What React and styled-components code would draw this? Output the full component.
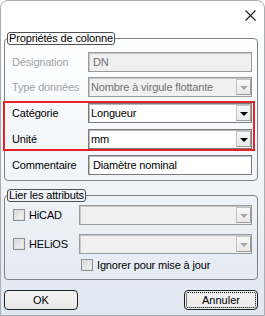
import React from "react";
import styled, { createGlobalStyle } from "styled-components";

const GlobalStyle = createGlobalStyle`
  html, body { margin: 0; padding: 0; background: #ffffff; }
  body {
    font-family: "Liberation Sans", Arial, sans-serif;
    font-size: 11px;
    letter-spacing: -0.15px;
    color: #000;
  }
  * { box-sizing: border-box; }
`;

const Window = styled.div`
  width: 265px;
  height: 316px;
  border: 1px solid #a9acb2;
  border-radius: 8px 8px 0 0;
  background: linear-gradient(to bottom, #ffffff 0px, #ffffff 30px, #f3f6fa 160px, #dfe7f1 316px);
  display: flex;
  flex-direction: column;
  padding: 0 6px 0 3px;
  overflow: hidden;
`;

const TitleBar = styled.div`
  height: 31px;
  display: flex;
  justify-content: flex-end;
  align-items: flex-start;
  padding: 9px 2px 0 0;
`;

const CloseIcon = styled.svg`
  width: 11px;
  height: 11px;
  display: block;
`;

const Group = styled.fieldset`
  margin: 0;
  padding: 0;
  min-width: 0;
  border: 1px solid #7f8287;
  border-radius: 4px;
  margin-top: ${(p) => p.$top || 0}px;
`;

const Legend = styled.legend`
  margin-left: 2px;
  padding: 0 1px 0 1px;
  height: 13px;
  line-height: 11px;
  border: 1px solid #4e5257;
  border-radius: 3px;
  font-size: 11px;
  color: #000;
`;

const GroupBody = styled.div`
  display: flex;
  flex-direction: column;
  padding: ${(p) => p.$pad};
`;

const Row = styled.div`
  display: grid;
  grid-template-columns: 76px 164px;
  align-items: center;
  height: 20px;
  margin-top: ${(p) => p.$gap || 0}px;
`;

const Label = styled.span`
  color: ${(p) => (p.$disabled ? "#a2a2a2" : "#000")};
  white-space: nowrap;
`;

const Highlight = styled.div`
  display: flex;
  flex-direction: column;
  gap: 6px;
  border: 2px solid #e4222a;
  margin: 4px -3px 0 -9px;
  padding: 0 1px 0 7px;
`;

const Field = styled.div`
  height: 20px;
  border: 1px solid ${(p) => (p.$disabled ? "#9a9a9a" : "#7a7a7a")};
  box-shadow: inset 1px 1px 0 ${(p) => (p.$disabled ? "#c9c9c9" : "#b9b9b9")};
  background: ${(p) => (p.$disabled ? "#f0f0f0" : "#ffffff")};
  color: ${(p) => (p.$disabled ? "#707070" : "#000")};
  display: flex;
  align-items: center;
  padding: 0 0 0 4px;
  white-space: nowrap;
  overflow: hidden;
`;

const Combo = styled.div`
  height: 20px;
  border: 1px solid ${(p) => (p.$disabled ? "#9a9a9a" : "#7a7a7a")};
  box-shadow: inset 1px 1px 0 ${(p) => (p.$disabled ? "#c9c9c9" : "#b9b9b9")};
  background: ${(p) => (p.$disabled ? "#f0f0f0" : "#ffffff")};
  color: ${(p) => (p.$disabled ? "#707070" : "#000")};
  display: flex;
  align-items: stretch;
  padding: 1px 0 1px 2px;
`;

const ComboValue = styled.span`
  flex: 1;
  display: flex;
  align-items: center;
  white-space: nowrap;
  overflow: hidden;
`;

const DropButton = styled.span`
  width: 15px;
  background: linear-gradient(to bottom, #f7f7f7, #e9e9e9);
  border: 1px solid #c3c3c3;
  border-right-color: #9d9d9d;
  border-bottom-color: #9d9d9d;
  display: flex;
  align-items: center;
  justify-content: center;
`;

const Arrow = styled.span`
  width: 0;
  height: 0;
  border-left: 4px solid transparent;
  border-right: 4px solid transparent;
  border-top: 4px solid ${(p) => (p.$disabled ? "#a8a8a8" : "#000")};
  margin-top: 1px;
`;

const LinkRow = styled.div`
  display: grid;
  grid-template-columns: 66px 173px;
  align-items: center;
  height: 20px;
  margin-top: ${(p) => p.$gap || 0}px;
`;

const CheckLabel = styled.label`
  display: flex;
  align-items: center;
  gap: 4px;
  white-space: nowrap;
  grid-column: ${(p) => p.$col || "auto"};
`;

const Check = styled.span`
  width: 12px;
  height: 12px;
  flex: none;
  border: 1px solid #8f8f8f;
  background: linear-gradient(135deg, #d6d6d6, #f7f7f7);
  box-shadow: inset 0 0 0 1px #e2e2e2;
`;

const IgnoreRow = styled.div`
  display: grid;
  grid-template-columns: 68px auto;
  align-items: center;
  height: 12px;
  margin-top: 5px;
`;

const ButtonBar = styled.div`
  display: flex;
  justify-content: space-between;
  margin-top: 10px;
`;

const Button = styled.button`
  width: 74px;
  height: 20px;
  border: 1px solid #1f1f1f;
  border-radius: 4px;
  background: linear-gradient(to bottom, #f4f4f4, #e9e9e9);
  font-family: "Liberation Sans", Arial, sans-serif;
  font-size: 11px;
  color: #000;
  padding: 0;
  outline: ${(p) => (p.$default ? "1px dotted #000" : "none")};
  outline-offset: -3px;
`;

function ComboBox({ value, disabled }) {
  return (
    <Combo $disabled={disabled}>
      <ComboValue>{value}</ComboValue>
      <DropButton>
        <Arrow $disabled={disabled} />
      </DropButton>
    </Combo>
  );
}

export default function App() {
  return (
    <>
      <GlobalStyle />
      <Window>
        <TitleBar>
          <CloseIcon viewBox="0 0 11 11">
            <path d="M0.5 0.5 L10.5 10.5 M10.5 0.5 L0.5 10.5" stroke="#1a1a1a" strokeWidth="1.1" fill="none" />
          </CloseIcon>
        </TitleBar>

        <Group>
          <Legend>Propriétés de colonne</Legend>
          <GroupBody $pad="7px 5px 5px 7px">
            <Row>
              <Label $disabled>Désignation</Label>
              <Field $disabled>DN</Field>
            </Row>
            <Row $gap={5}>
              <Label $disabled>Type données</Label>
              <ComboBox value="Nombre à virgule flottante" disabled />
            </Row>
            <Highlight>
              <Row>
                <Label>Catégorie</Label>
                <ComboBox value="Longueur" />
              </Row>
              <Row>
                <Label>Unité</Label>
                <ComboBox value="mm" />
              </Row>
            </Highlight>
            <Row $gap={4}>
              <Label>Commentaire</Label>
              <Field>Diamètre nominal</Field>
            </Row>
          </GroupBody>
        </Group>

        <Group $top={8}>
          <Legend>Lier les attributs</Legend>
          <GroupBody $pad="3px 5px 8px 8px">
            <LinkRow>
              <CheckLabel>
                <Check />
                HiCAD
              </CheckLabel>
              <ComboBox value="" disabled />
            </LinkRow>
            <LinkRow $gap={9}>
              <CheckLabel>
                <Check />
                HELiOS
              </CheckLabel>
              <ComboBox value="" disabled />
            </LinkRow>
            <IgnoreRow>
              <span />
              <CheckLabel>
                <Check />
                Ignorer pour mise à jour
              </CheckLabel>
            </IgnoreRow>
          </GroupBody>
        </Group>

        <ButtonBar>
          <Button>OK</Button>
          <Button $default>Annuler</Button>
        </ButtonBar>
      </Window>
    </>
  );
}
